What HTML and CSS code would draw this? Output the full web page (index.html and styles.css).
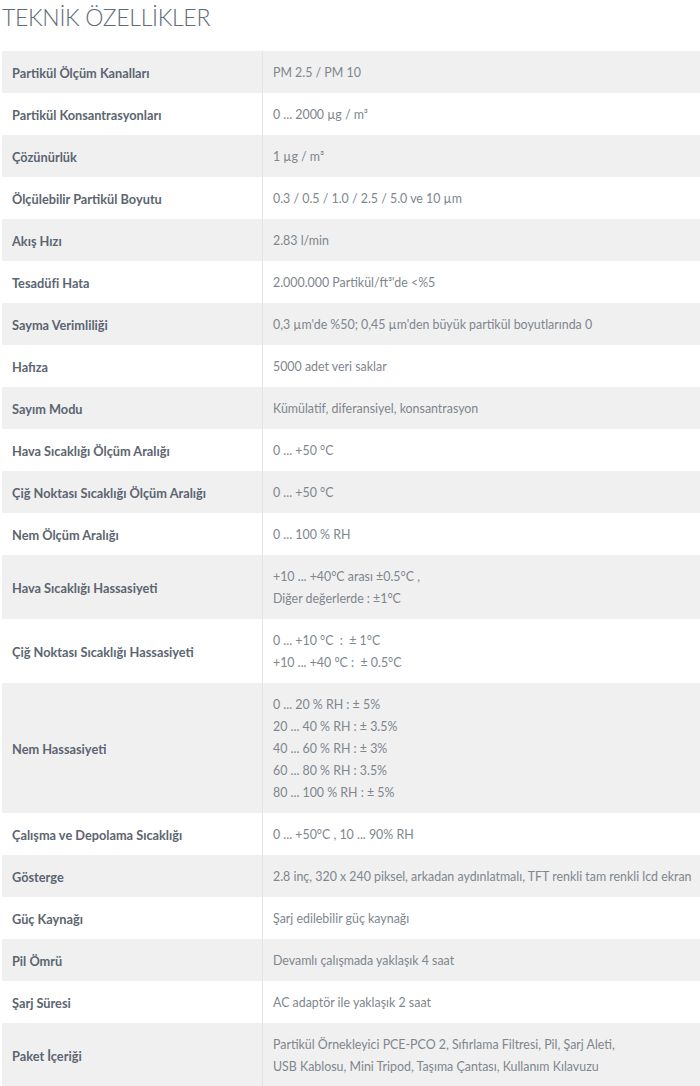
FILE: index.html
```html
<!DOCTYPE html>
<html lang="tr">
<head>
<meta charset="utf-8">
<title>Teknik Özellikler</title>
<link rel="stylesheet" href="styles.css">
</head>
<body>
<h1 class="title">TEKNİK ÖZELLİKLER</h1>
<table class="specs">
<tbody>
<tr><th>Partikül Ölçüm Kanalları</th><td>PM 2.5 / PM 10</td></tr>
<tr><th>Partikül Konsantrasyonları</th><td>0 ... 2000 µg / m³</td></tr>
<tr><th>Çözünürlük</th><td>1 µg / m³</td></tr>
<tr><th>Ölçülebilir Partikül Boyutu</th><td>0.3 / 0.5 / 1.0 / 2.5 / 5.0 ve 10 µm</td></tr>
<tr><th>Akış Hızı</th><td>2.83 l/min</td></tr>
<tr><th>Tesadüfi Hata</th><td>2.000.000 Partikül/ft³'de &lt;%5</td></tr>
<tr><th>Sayma Verimliliği</th><td>0,3 µm'de %50; 0,45 µm'den büyük partikül boyutlarında 0</td></tr>
<tr><th>Hafıza</th><td>5000 adet veri saklar</td></tr>
<tr><th>Sayım Modu</th><td>Kümülatif, diferansiyel, konsantrasyon</td></tr>
<tr><th>Hava Sıcaklığı Ölçüm Aralığı</th><td>0 ... +50 °C</td></tr>
<tr><th>Çiğ Noktası Sıcaklığı Ölçüm Aralığı</th><td>0 ... +50 °C</td></tr>
<tr><th>Nem Ölçüm Aralığı</th><td>0 ... 100 % RH</td></tr>
<tr><th>Hava Sıcaklığı Hassasiyeti</th><td>+10 ... +40°C arası ±0.5°C ,<br>Diğer değerlerde : ±1°C</td></tr>
<tr><th>Çiğ Noktası Sıcaklığı Hassasiyeti</th><td>0 ... +10 °C&nbsp; : &nbsp;± 1°C<br>+10 ... +40 °C :&nbsp; ± 0.5°C</td></tr>
<tr><th>Nem Hassasiyeti</th><td>0 ... 20 % RH : ± 5%<br>20 ... 40 % RH : ± 3.5%<br>40 ... 60 % RH : ± 3%<br>60 ... 80 % RH : 3.5%<br>80 ... 100 % RH : ± 5%</td></tr>
<tr><th>Çalışma ve Depolama Sıcaklığı</th><td>0 ... +50°C , 10 ... 90% RH</td></tr>
<tr><th>Gösterge</th><td>2.8 inç, 320 x 240 piksel, arkadan aydınlatmalı, TFT renkli tam renkli lcd ekran</td></tr>
<tr><th>Güç Kaynağı</th><td>Şarj edilebilir güç kaynağı</td></tr>
<tr><th>Pil Ömrü</th><td>Devamlı çalışmada yaklaşık 4 saat</td></tr>
<tr><th>Şarj Süresi</th><td>AC adaptör ile yaklaşık 2 saat</td></tr>
<tr><th>Paket İçeriği</th><td>Partikül Örnekleyici PCE-PCO 2, Sıfırlama Filtresi, Pil, Şarj Aleti,<br>USB Kablosu, Mini Tripod, Taşıma Çantası, Kullanım Kılavuzu</td></tr>
</tbody>
</table>
</body>
</html>
```
FILE: styles.css
```css
html, body {
  margin: 0;
  padding: 0;
  background: #ffffff;
}
body {
  padding-left: 2px;
  font-family: "Lato", "Open Sans", sans-serif;
}
.title {
  margin: 0 0 16px 0;
  font-size: 23px;
  line-height: 35px;
  font-weight: 300;
  letter-spacing: -0.3px;
  color: #5e6b78;
  white-space: nowrap;
}
.specs {
  width: 698px;
  border-collapse: collapse;
  border-spacing: 0;
  table-layout: fixed;
}
.specs tr:nth-child(odd) {
  background: #f0f0f0;
}
.specs th,
.specs td {
  padding: 11px 10px 9px 10px;
  line-height: 22px;
  vertical-align: middle;
  text-align: left;
}
.specs th {
  width: 240px;
  font-size: 12.75px;
  font-weight: 700;
  color: #5b6570;
}
.specs td {
  border-left: 1px solid #e4e4e4;
  font-size: 12.4px;
  font-weight: 400;
  color: #7e868e;
  white-space: nowrap;
}
```
